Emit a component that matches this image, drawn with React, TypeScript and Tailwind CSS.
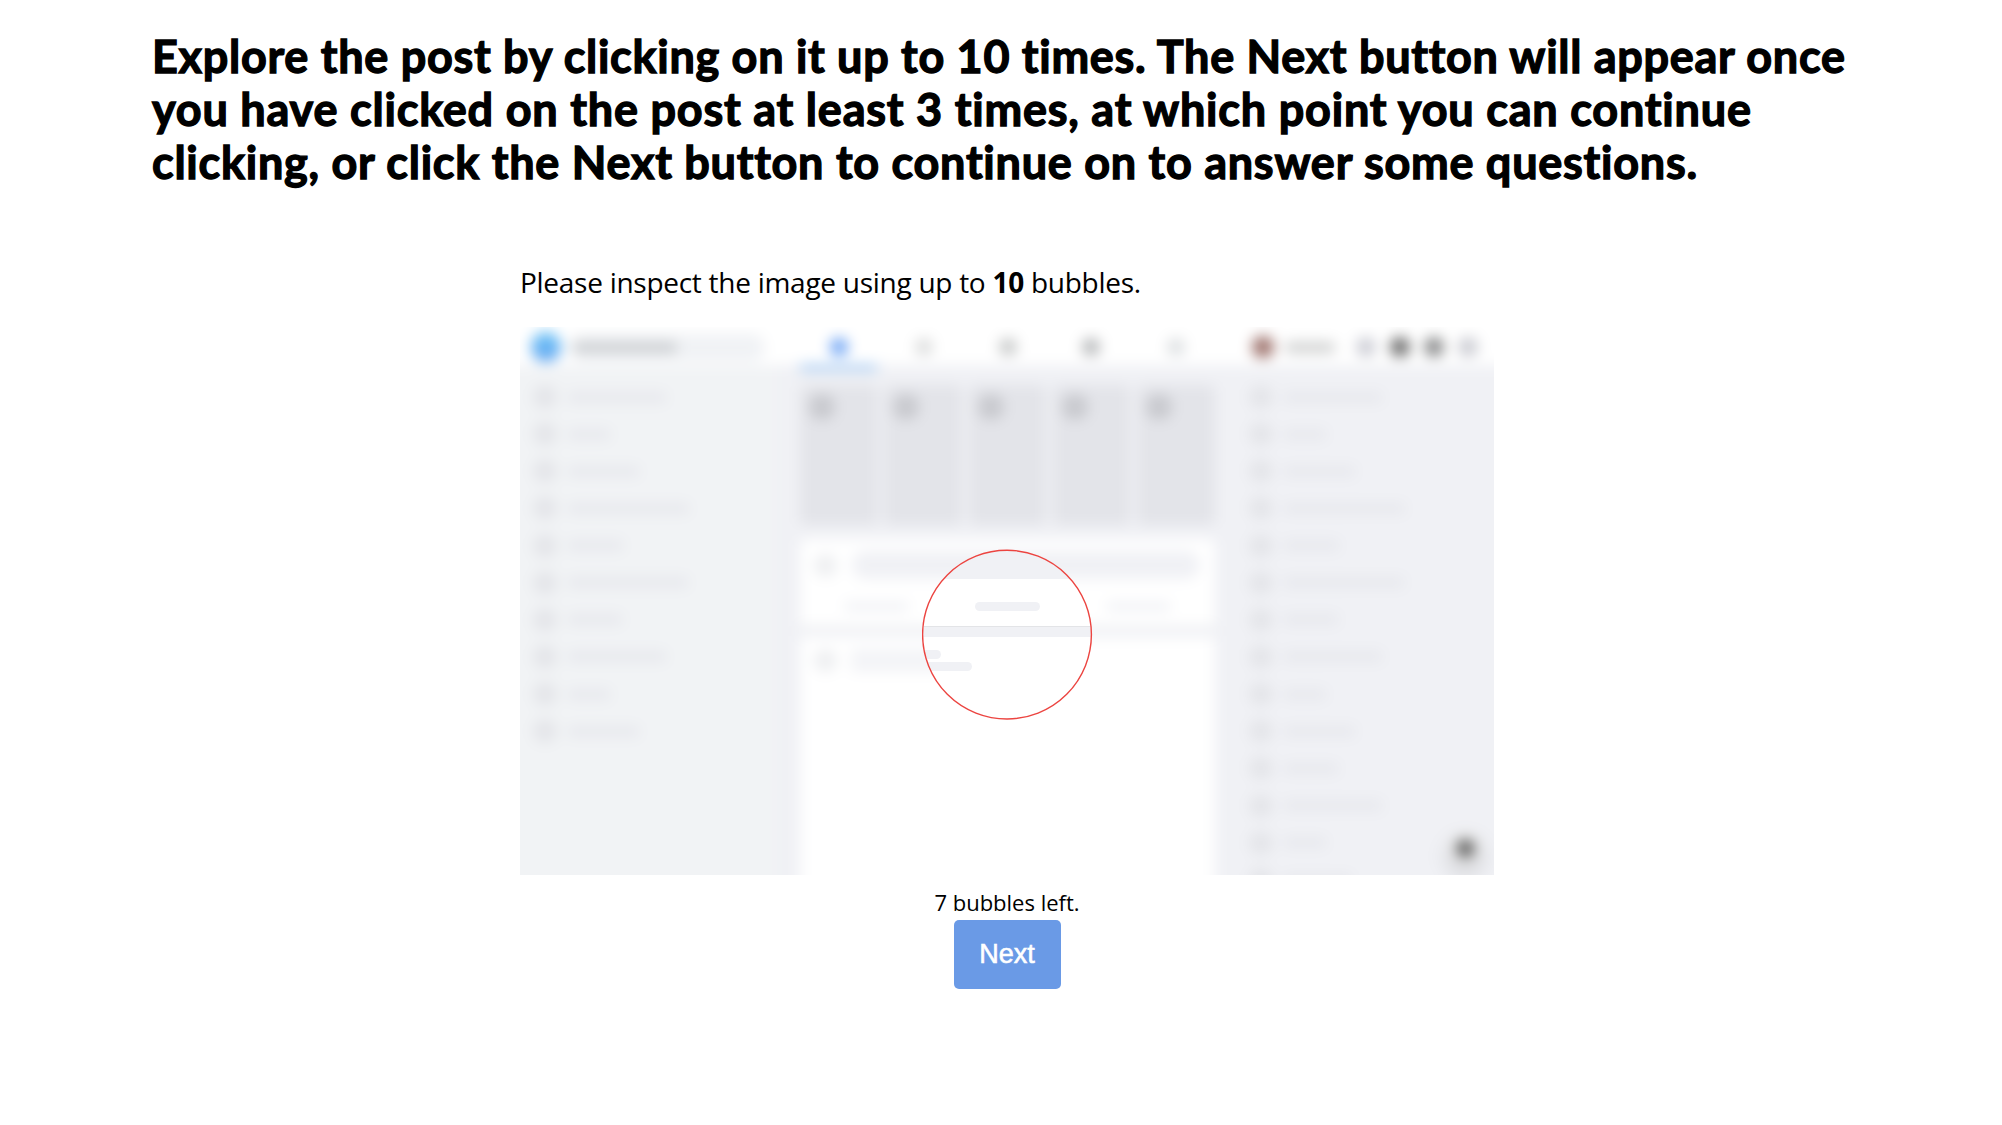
const rowWidths = [100, 44, 73, 123, 57, 122, 56, 100, 44, 73, 56, 100, 44, 70];

function SideList({ count }: { count: number }) {
  return (
    <div className="flex flex-col gap-[13.15px]">
      {rowWidths.slice(0, count).map((w, i) => (
        <div key={i} className="flex h-6 shrink-0 items-center gap-[10px]">
          <div className="size-6 rounded-full bg-[#e4e5e9]" />
          <div className="h-[11px] rounded-full bg-[#e7e8ed]" style={{ width: w }} />
        </div>
      ))}
    </div>
  );
}

function Dot({ className }: { className: string }) {
  return <div className={`size-[18px] shrink-0 rounded-full ${className}`} />;
}

/* Skeleton of the social feed; carries a 20px bleed on every side so blurring keeps its edges. */
function FeedPage() {
  return (
    <div className="flex h-[588px] w-[1014px] flex-col overflow-hidden bg-[#f0f1f5]">
      <header className="flex h-[58px] shrink-0 items-center bg-white pt-[22px]">
        <div className="flex w-[300px] items-center gap-[8px] pl-[31px]">
          <div className="size-[30px] rounded-full bg-linear-to-b from-[#6cc4f6] to-[#64a4f0]" />
          <div className="flex h-[27px] w-[196px] items-center rounded-full bg-[#f0f2f5] pl-[4px]">
            <div className="h-[11px] w-[104px] rounded bg-[#cbced1]" />
          </div>
        </div>
        <div className="flex w-[414px] gap-[6.75px]">
          <div className="relative flex w-[77.5px] justify-center">
            <Dot className="bg-[#6ba2f4]" />
            <div className="absolute top-[27px] h-[5px] w-full bg-[#8fbdf0]" />
          </div>
          <div className="flex w-[77.5px] justify-center pl-0.5"><Dot className="bg-[#dcdddd]" /></div>
          <div className="flex w-[77.5px] justify-center pl-0.5"><Dot className="bg-[#c6c8c8]" /></div>
          <div className="flex w-[77.5px] justify-center"><Dot className="bg-[#b4b6b8]" /></div>
          <div className="flex w-[77.5px] justify-center pl-0.5"><Dot className="bg-[#dcdfe1]" /></div>
        </div>
        <div className="flex items-center pl-[38px]">
          <div className="size-[22px] rounded-full bg-[#9e736d]" />
          <div className="ml-[11px] h-[11px] w-[50px] rounded bg-[#cfd0d0]" />
          <div className="ml-[21px] flex gap-[14px]">
            <div className="size-[20px] rounded-full bg-[#cccdd5]" />
            <div className="size-[20px] rounded-full bg-[#6a6a6a]" />
            <div className="size-[20px] rounded-full bg-[#868788]" />
            <div className="size-[20px] rounded-full bg-[#cacbd2]" />
          </div>
        </div>
      </header>
      <div className="flex h-[530px] shrink-0">
        <aside className="w-[277px] shrink-0 bg-[#f1f3f5] pl-[33px] pt-[20px]">
          <SideList count={10} />
        </aside>
        <main className="ml-[23px] flex w-[415px] shrink-0 flex-col">
          <div className="mt-[20px] flex gap-[6.75px]">
            {[0, 1, 2, 3, 4].map((i) => (
              <div key={i} className="h-[140px] w-[77.5px] rounded-md bg-[#e3e4e9] pl-[9px] pt-[9px]">
                <div className="size-[26px] rounded-full bg-[#c8c9ce]" />
              </div>
            ))}
          </div>
          <section className="mt-[14px] h-[87px] shrink-0 rounded-t-md bg-white pt-[12px]">
            <div className="flex items-center gap-[15px] pl-[14px]">
              <div className="size-[23px] rounded-full bg-[#eeeff1]" />
              <div className="h-[28px] w-[348px] rounded-full bg-[#f0f1f5]" />
            </div>
            <div className="mt-[23px] flex gap-[66px] pl-[44px]">
              <div className="h-[9px] w-[65px] rounded-full bg-[#f0f1f5]" />
              <div className="h-[9px] w-[65px] rounded-full bg-[#f0f1f5]" />
              <div className="h-[9px] w-[65px] rounded-full bg-[#f0f1f5]" />
            </div>
          </section>
          <div className="h-[11px] shrink-0 border-t border-[#e3e4e7]" />
          <section className="grow bg-white pl-[14px] pt-[12px]">
            <div className="flex items-center gap-[13px]">
              <div className="size-[23px] rounded-full bg-[#eeeff1]" />
              <div className="flex flex-col gap-[3px]">
                <div className="h-[9px] w-[91px] rounded-full bg-[#f0f1f5]" />
                <div className="h-[9px] w-[122px] rounded-full bg-[#f0f1f5]" />
              </div>
            </div>
          </section>
        </main>
        <aside className="relative grow pl-[34px] pt-[20px]">
          <SideList count={14} />
          <div className="absolute right-[33px] bottom-[31px] flex size-[32px] items-center justify-center rounded-full bg-[#efefef] shadow-[0_8px_16px_2px_rgba(0,0,0,0.14)]">
            <div className="size-[19px] rounded-full bg-[#5e5e5e]" />
          </div>
        </aside>
      </div>
    </div>
  );
}

export default function App() {
  return (
    <div className="flex h-[1125px] w-[2002px] flex-col overflow-hidden bg-white font-['Open_Sans',sans-serif] text-black">
      <h1 className="ml-[152px] mt-[30px] flex h-[161px] flex-col font-['Lato',sans-serif] text-[45px] font-bold leading-[53px] whitespace-nowrap [-webkit-text-stroke:1.3px_black] [font-variant-ligatures:none]">
        <span className="tracking-[0.71px]">Explore the post by clicking on it up to 10 times. The Next button will appear once</span>
        <span className="tracking-[0.79px]">you have clicked on the post at least 3 times, at which point you can continue</span>
        <span className="tracking-[0.74px]">clicking, or click the Next button to continue on to answer some questions.</span>
      </h1>
      <div className="ml-[520px] mt-[71px] flex w-[974px] flex-col items-center">
        <p className="h-[65px] self-start text-[28px] leading-[40px] tracking-[-0.27px] whitespace-nowrap">
          Please inspect the image using up to <b>10</b> bubbles.
        </p>
        <div className="relative h-[548px] w-[974px] overflow-hidden">
          <div className="absolute -inset-5 blur-[7px]">
            <FeedPage />
          </div>
          <div className="absolute -inset-5 [clip-path:circle(84px_at_507px_327.5px)]">
            <FeedPage />
          </div>
          <svg className="absolute left-[402px] top-[222px] size-[171px]" viewBox="0 0 171 171" fill="none">
            <circle cx="85" cy="85.6" r="84.4" stroke="#ec4440" strokeWidth="1.4" />
          </svg>
        </div>
        <p className="mt-[11px] h-[33px] text-[22px] leading-[32px] whitespace-nowrap">7 bubbles left.</p>
        <button className="mt-px h-[69px] w-[107px] rounded-[5px] bg-[#6a9ae6] font-['Liberation_Sans',sans-serif] text-[27px] text-white [-webkit-text-stroke:0.6px_white]">
          Next
        </button>
      </div>
    </div>
  );
}
